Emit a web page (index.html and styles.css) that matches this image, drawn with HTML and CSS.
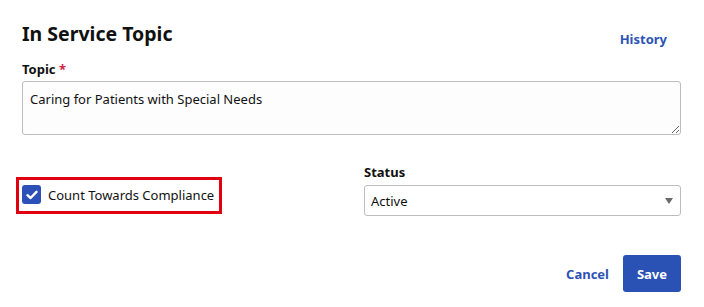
FILE: index.html
```html
<!DOCTYPE html>
<html lang="en">
<head>
    <meta charset="UTF-8">
    <meta name="viewport" content="width=device-width, initial-scale=1.0">
    <title>In Service Topic</title>
    <link rel="stylesheet" href="styles.css">
</head>
<body>
    <div class="panel">
        <div class="header">
            <h1>In Service Topic</h1>
            <a href="#" class="link">History</a>
        </div>

        <label class="field-label" for="topic">Topic <span class="req">*</span></label>
        <textarea id="topic" class="textarea">Caring for Patients with Special Needs</textarea>

        <div class="row">
            <div class="col col-check">
                <label class="check-box">
                    <span class="check">
                        <svg width="12" height="10" viewBox="0 0 12 10"><path d="M1.5 5.2 L4.6 8 L10.5 1.8" fill="none" stroke="#fff" stroke-width="2.4" stroke-linecap="round" stroke-linejoin="round"/></svg>
                    </span>
                    <span>Count Towards Compliance</span>
                </label>
            </div>
            <div class="col">
                <label class="field-label status-label" for="status">Status</label>
                <div class="select" id="status">
                    <span>Active</span>
                    <span class="caret"></span>
                </div>
            </div>
        </div>

        <div class="actions">
            <a href="#" class="link">Cancel</a>
            <button class="btn-save">Save</button>
        </div>
    </div>
</body>
</html>
```

FILE: styles.css
```css
body {
    margin: 0;
    padding: 0;
    background: #ffffff;
    font-family: "Noto Sans", "Open Sans", sans-serif;
    font-size: 13px;
    color: #111;
}

.panel {
    padding: 20px 23px 0 22px;
}

.header {
    display: flex;
    justify-content: space-between;
    align-items: flex-start;
    height: 27px;
}

.header h1 {
    margin: 0;
    font-size: 19.5px;
    line-height: 27px;
    font-weight: 700;
}

.link {
    color: #2d53b5;
    font-weight: 700;
    font-size: 13px;
    line-height: 18px;
    text-decoration: none;
}

.header .link {
    margin-right: 14px;
    margin-top: 10px;
}

.field-label {
    display: block;
    font-size: 13px;
    line-height: 18px;
    font-weight: 700;
    margin: 13px 0 3px;
}

.status-label {
    margin: 0 0 4px;
}

.req {
    color: #d0244a;
}

.textarea {
    display: block;
    box-sizing: border-box;
    width: 100%;
    height: 54px;
    border: 1px solid #bdbdbd;
    border-radius: 3px;
    padding: 8px 7px;
    font-family: inherit;
    font-size: 13px;
    color: #111;
    background: #fdfdfd;
    resize: vertical;
}

.row {
    display: grid;
    grid-template-columns: 1fr 1fr;
    column-gap: 25px;
    margin-top: 28px;
}

.col-check {
    display: flex;
    align-items: flex-start;
    padding-top: 14px;
}

.check-box {
    display: flex;
    align-items: center;
    gap: 7px;
    border: 3px solid #e0000f;
    padding: 5px 5px 7px 3px;
    margin-left: -6px;
    font-size: 13px;
}

.check {
    width: 19px;
    height: 19px;
    border-radius: 3px;
    background: #2c50b7;
    display: flex;
    align-items: center;
    justify-content: center;
}

.select {
    display: flex;
    justify-content: space-between;
    align-items: center;
    box-sizing: border-box;
    height: 31px;
    border: 1px solid #bdbdbd;
    border-radius: 3px;
    padding: 0 7px 0 6px;
    font-size: 13px;
}

.caret {
    width: 0;
    height: 0;
    border-left: 4px solid transparent;
    border-right: 4px solid transparent;
    border-top: 6px solid #6a6a6a;
}

.actions {
    display: flex;
    justify-content: flex-end;
    align-items: center;
    gap: 14px;
    margin-top: 39px;
}

.btn-save {
    background: #2a52b5;
    color: white;
    border: none;
    border-radius: 3px;
    width: 58px;
    height: 37px;
    font-family: inherit;
    font-size: 13px;
    font-weight: 700;
}
```
